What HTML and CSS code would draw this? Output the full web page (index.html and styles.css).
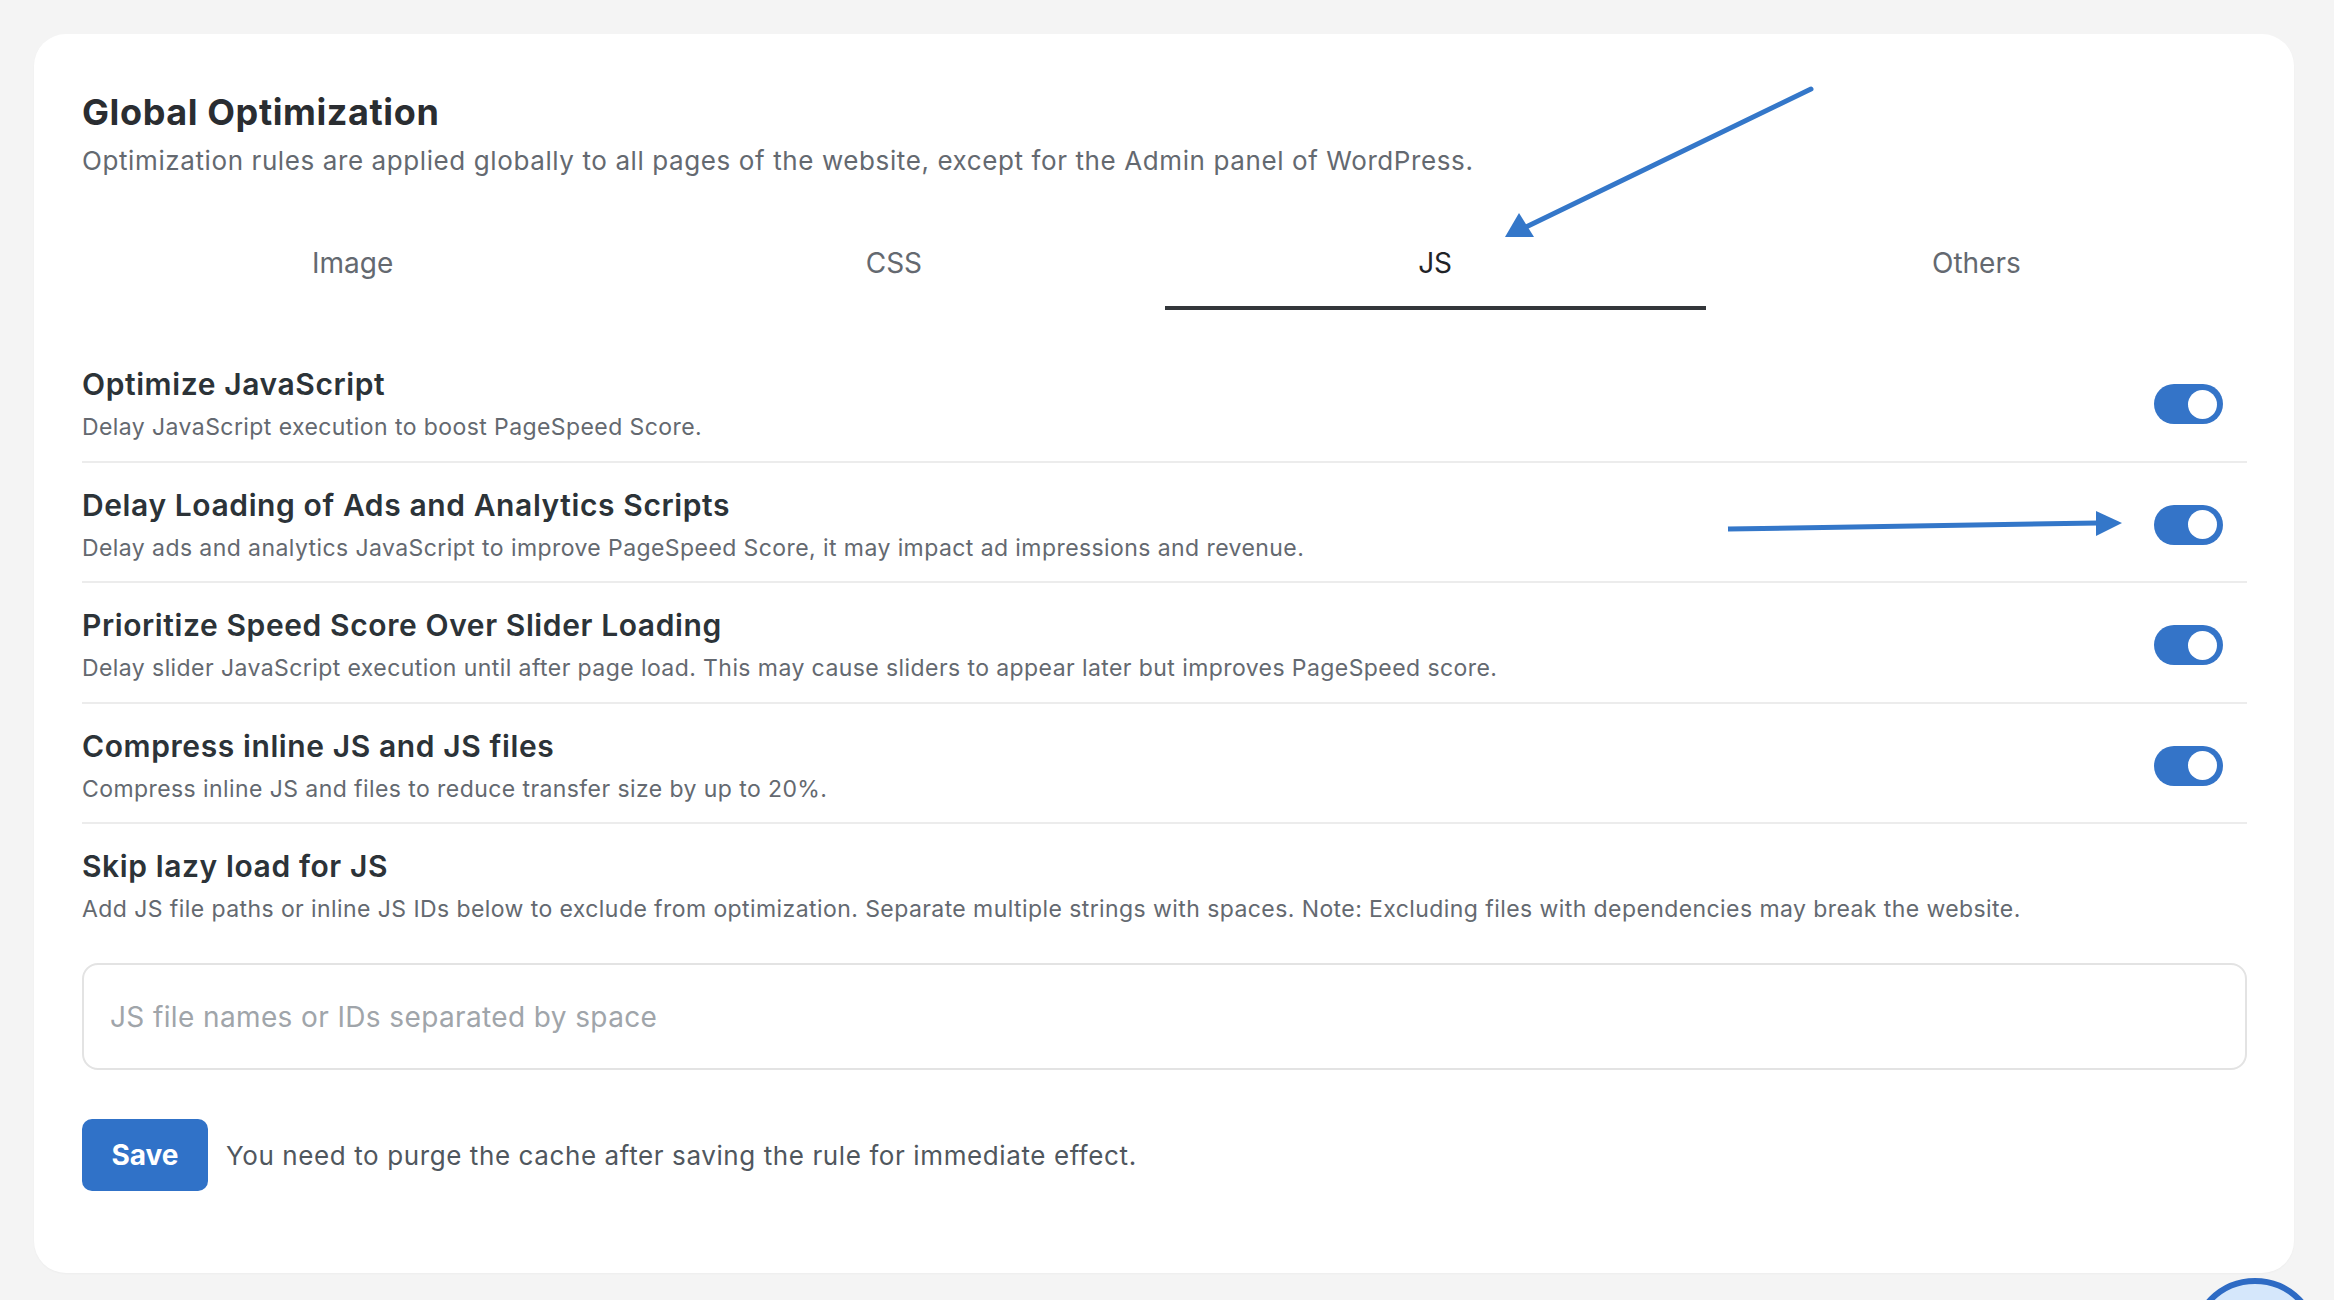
FILE: index.html
```html
<!DOCTYPE html>
<html lang="en">
<head>
<meta charset="utf-8">
<title>Global Optimization</title>
<link rel="stylesheet" href="styles.css">
</head>
<body>
<div class="page">
  <section class="card">
    <h1 class="card-title">Global Optimization</h1>
    <p class="card-subtitle">Optimization rules are applied globally to all pages of the website, except for the Admin panel of WordPress.</p>

    <nav class="tabs">
      <div class="tab">Image</div>
      <div class="tab">CSS</div>
      <div class="tab tab-active">JS</div>
      <div class="tab">Others</div>
    </nav>

    <div class="settings">
      <div class="setting">
        <div class="setting-text">
          <h2 class="setting-title">Optimize JavaScript</h2>
          <p class="setting-desc">Delay JavaScript execution to boost PageSpeed Score.</p>
        </div>
        <span class="toggle"><span class="knob"></span></span>
      </div>
      <div class="setting">
        <div class="setting-text">
          <h2 class="setting-title">Delay Loading of Ads and Analytics Scripts</h2>
          <p class="setting-desc">Delay ads and analytics JavaScript to improve PageSpeed Score, it may impact ad impressions and revenue.</p>
        </div>
        <span class="toggle"><span class="knob"></span></span>
      </div>
      <div class="setting">
        <div class="setting-text">
          <h2 class="setting-title">Prioritize Speed Score Over Slider Loading</h2>
          <p class="setting-desc">Delay slider JavaScript execution until after page load. This may cause sliders to appear later but improves PageSpeed score.</p>
        </div>
        <span class="toggle"><span class="knob"></span></span>
      </div>
      <div class="setting">
        <div class="setting-text">
          <h2 class="setting-title">Compress inline JS and JS files</h2>
          <p class="setting-desc">Compress inline JS and files to reduce transfer size by up to 20%.</p>
        </div>
        <span class="toggle"><span class="knob"></span></span>
      </div>
      <div class="setting setting-last">
        <div class="setting-text">
          <h2 class="setting-title">Skip lazy load for JS</h2>
          <p class="setting-desc">Add JS file paths or inline JS IDs below to exclude from optimization. Separate multiple strings with spaces. Note: Excluding files with dependencies may break the website.</p>
        </div>
      </div>
    </div>

    <div class="field">JS file names or IDs separated by space</div>

    <div class="actions">
      <button class="btn-save">Save</button>
      <span class="actions-note">You need to purge the cache after saving the rule for immediate effect.</span>
    </div>
  </section>
</div>

<svg class="annotations" width="2334" height="1300" viewBox="0 0 2334 1300" xmlns="http://www.w3.org/2000/svg">
  <line x1="1811" y1="89" x2="1526" y2="227" stroke="#3477c9" stroke-width="5" stroke-linecap="round"/>
  <polygon points="1505,237 1519,213 1534,237" fill="#3477c9"/>
  <line x1="1728" y1="529" x2="2098" y2="523" stroke="#3477c9" stroke-width="5"/>
  <polygon points="2096,511 2122,523 2096,536" fill="#3477c9"/>
</svg>

<div class="chat-bubble"></div>
</body>
</html>
```

FILE: styles.css
```css
html, body {
  margin: 0;
  padding: 0;
  overflow: hidden;
}

body {
  background: #f4f4f4;
  font-family: Inter, "Noto Sans", "Liberation Sans", sans-serif;
  color: #2c3338;
}

.page {
  padding: 34px 40px 30px 34px;
}

.card {
  background: #ffffff;
  border-radius: 32px;
  padding: 56px 47px 82px 48px;
  box-shadow: 0 1px 2px rgba(0, 0, 0, 0.03);
}

.card-title {
  margin: 0;
  font-size: 36px;
  line-height: 44px;
  font-weight: 700;
  color: #2a2d31;
  letter-spacing: 0.6px;
}

.card-subtitle {
  margin: 9px 0 0;
  font-size: 26px;
  line-height: 36px;
  color: #646970;
  letter-spacing: 0.6px;
}

.tabs {
  display: grid;
  grid-template-columns: repeat(4, 1fr);
  margin-top: 31px;
}

.tab {
  text-align: center;
  font-size: 28px;
  line-height: 36px;
  padding: 35px 0 25px;
  color: #646970;
  border-bottom: 4px solid transparent;
}

.tab-active {
  color: #1f2327;
  border-bottom-color: #33363a;
}

.settings {
  margin-top: 32px;
}

.setting {
  display: flex;
  align-items: center;
  justify-content: space-between;
  padding: 22px 24px 16.5px 0;
  border-bottom: 2px solid #ececec;
}

.setting-last {
  border-bottom: none;
  padding-bottom: 0;
}

.setting-title {
  margin: 0;
  font-size: 30px;
  line-height: 40px;
  font-weight: 600;
  color: #2c3338;
  letter-spacing: 0.6px;
}

.setting-desc {
  margin: 6px 0 0;
  font-size: 23px;
  line-height: 34px;
  color: #646970;
  letter-spacing: 0.42px;
}

.toggle {
  position: relative;
  display: flex;
  align-items: center;
  justify-content: flex-end;
  width: 69px;
  height: 40px;
  padding: 0 6px;
  box-sizing: border-box;
  border-radius: 20px;
  background: #3474c8;
  flex-shrink: 0;
}

.knob {
  width: 29px;
  height: 29px;
  border-radius: 50%;
  background: #ffffff;
}

.field {
  margin-top: 37px;
  height: 103px;
  border: 2px solid #e3e3e3;
  border-radius: 16px;
  display: flex;
  align-items: center;
  padding: 0 26px;
  font-size: 28px;
  color: #a0a5aa;
  letter-spacing: 0.38px;
}

.actions {
  display: flex;
  align-items: center;
  gap: 18px;
  margin-top: 49px;
}

.btn-save {
  width: 126px;
  height: 72px;
  border: none;
  border-radius: 10px;
  background: #3072c8;
  color: #ffffff;
  font-family: inherit;
  font-size: 28px;
  font-weight: 700;
}

.actions-note {
  font-size: 26px;
  color: #50575e;
  letter-spacing: 0.6px;
}

.annotations {
  position: absolute;
  top: 0;
  left: 0;
  pointer-events: none;
}

.chat-bubble {
  position: fixed;
  left: 2190px;
  top: 1278px;
  width: 130px;
  height: 130px;
  box-sizing: border-box;
  border-radius: 50%;
  border: 6px solid #2e6bc4;
  background: #d5e7fb;
}
```
